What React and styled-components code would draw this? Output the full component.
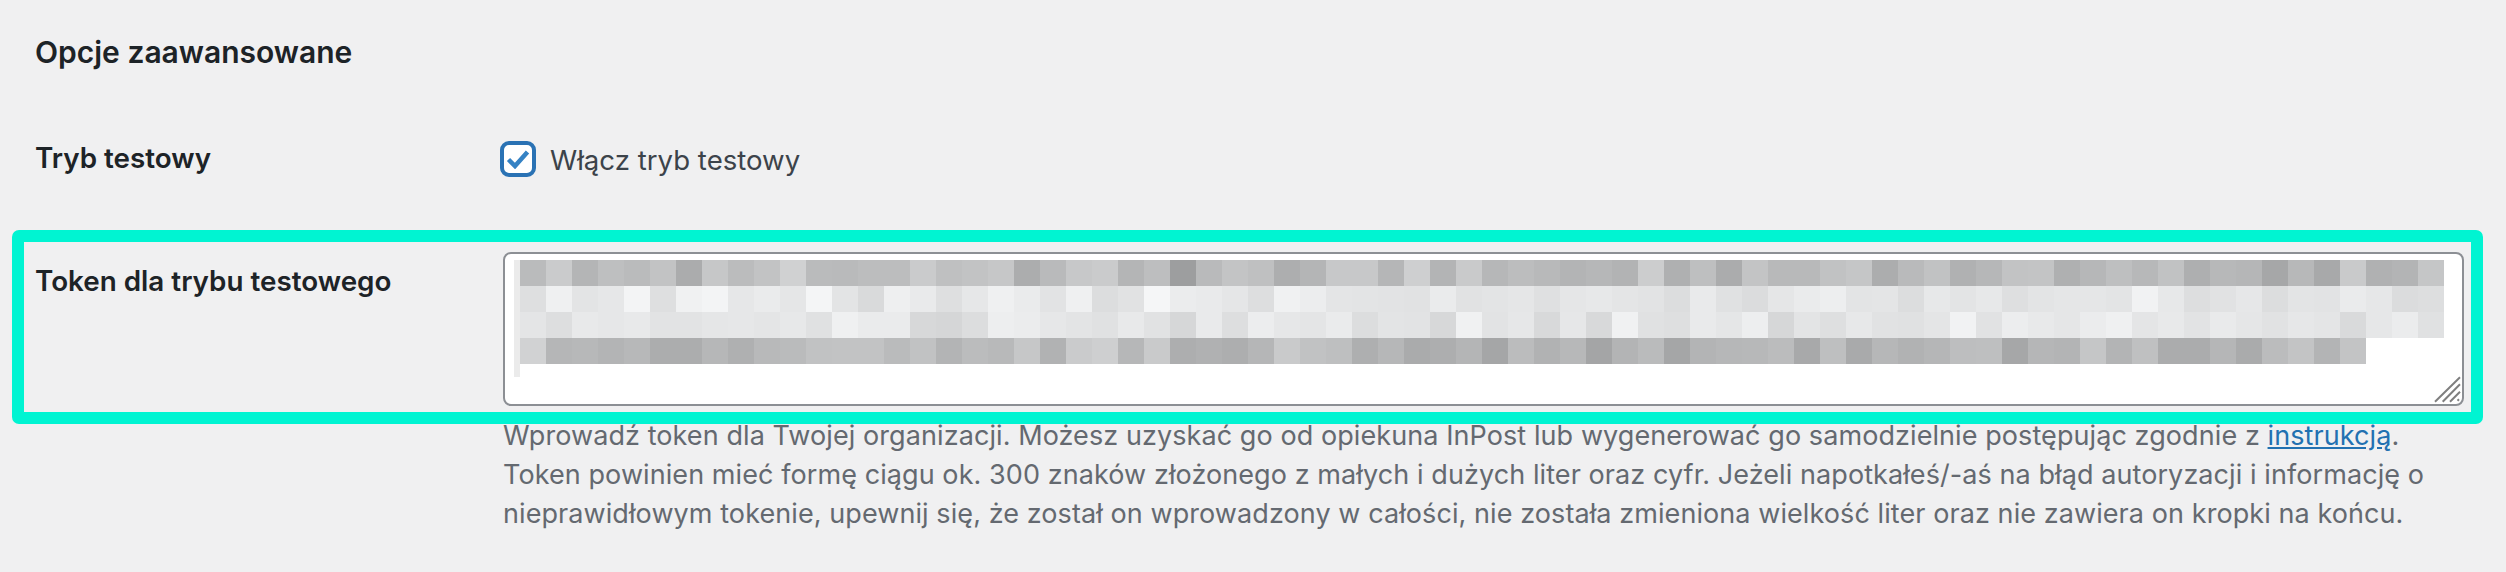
import React from 'react'
import styled, { createGlobalStyle } from 'styled-components'

const GlobalStyle = createGlobalStyle`
    html, body {
        margin: 0;
        background: #f0f0f1;
    }
    body {
        font-family: Inter, "Noto Sans", "Liberation Sans", sans-serif;
        color: #1d2327;
    }
`

// Blurred token, one row of grey levels per line of text
const tokenRows = [
    'ba ca b4 be ba c2 ab c6 bb c2 d0 ba b9 bc bc ca bf c2 c6 ac b9 c7 ca b4 bd 9d b9 c3 bf ad b4 c7 c7 b5 ce b3 c9 b6 bc b8 b3 b6 b2 cc af be ab c3 b8 b8 c1 c5 ac b9 c1 b0 b6 c2 c3 af b6 be b7 c1 ae b7 b5 a6 b7 a8 c9 b0 b3 c5',
    'de ef e3 e6 f3 de f0 f3 e6 ea e5 f4 e3 d9 ee e9 de e6 ef ea e2 ef dc e1 f5 eb e9 e5 dd f0 ec e4 e3 e2 e1 ea e1 e3 e5 df e5 e7 e4 e2 dc e9 e0 db e5 ea ed e3 e4 dc e7 e3 e7 de e3 e5 e5 e3 f1 e7 dd e1 e6 dc e3 e2 ea e6 db dd',
    'e4 dd e8 e6 e8 e2 e2 e5 e6 e4 e7 e0 ef ea ea d7 d5 dc ed eb e6 e3 e0 e8 e1 d6 e9 dd ec e6 e4 ea dc e3 e2 d7 f0 e2 e6 d8 e6 d8 f0 e0 de e9 e5 ed d6 e3 de e7 e1 e0 e4 f1 e1 ec e8 e5 eb ef e4 e8 e2 e9 e5 e1 e6 e4 d9 e6 eb e0',
    'd1 b5 b7 b3 b7 ac ac b6 af b8 ba c1 c2 c2 ba c1 b3 bb b8 c6 b1 ca ce b6 c9 ad b0 ad b5 c9 c1 be ae b6 aa ad b4 a5 bb b1 b7 a4 b3 ba a5 b3 b6 b7 bb a8 be a9 b6 b1 b5 bd be a6 b5 b3 c5 b3 bf ab ab b5 aa bb c3 b3 c3',
].map(row => row.split(' ').map(level => parseInt(level, 16)))

const Page = styled.div`
    position: relative;
    width: 2506px;
    height: 572px;
    box-sizing: border-box;
    padding: 33px 0 0 35px;
    overflow: hidden;
`

const SectionTitle = styled.h2`
    margin: 0;
    font-size: 30px;
    line-height: 38px;
    font-weight: 600;
    color: #1d2327;
`

const FormRow = styled.div`
    display: flex;
    align-items: flex-start;
    margin-top: ${props => props.$gap}px;
`

const RowLabel = styled.div`
    flex: 0 0 468px;
    font-size: 27.8px;
    line-height: 34px;
    font-weight: 600;
    color: #1d2327;
    padding-top: ${props => props.$offset || 0}px;
`

const FieldColumn = styled.div`
    flex: 1;
    min-width: 0;
`

const CheckLabel = styled.label`
    display: flex;
    align-items: center;
    gap: 14px;
    margin-left: -3px;
    font-size: 27.6px;
    line-height: 34px;
    color: #3c434a;
`

const CheckText = styled.span`
    padding-top: 2px;
`

const CheckBox = styled.span`
    display: flex;
    align-items: center;
    justify-content: center;
    width: 36px;
    height: 36px;
    box-sizing: border-box;
    background: #fff;
    border: 4px solid #2a72b4;
    border-radius: 9px;
`

const TokenBox = styled.div`
    position: relative;
    display: flex;
    align-items: flex-start;
    width: 1961px;
    height: 154px;
    box-sizing: border-box;
    padding: 6px 0 0 9px;
    background: #fff;
    border: 2px solid #8c8f94;
    border-radius: 8px;
`

const SelectionEdge = styled.div`
    flex: 0 0 6px;
    height: 117px;
    background: #ebebeb;
`

const TokenLines = styled.div`
    display: flex;
    flex-direction: column;
`

const TokenLine = styled.div`
    display: flex;
`

const TokenCell = styled.span`
    width: 26px;
    height: 26px;
`

const ResizeGrip = styled.svg`
    position: absolute;
    right: 1px;
    bottom: 1px;
    width: 27px;
    height: 27px;
`

const Description = styled.p`
    margin: 10px 0 0;
    font-size: 27px;
    line-height: 39px;
    letter-spacing: 0.08px;
    color: #646970;
    white-space: nowrap;
`

const HelpLink = styled.a`
    color: #2271b1;
    text-decoration: underline;
`

// Highlight drawn over the screenshot, it covers the top of the first help line
const HighlightFrame = styled.div`
    position: absolute;
    left: 12px;
    top: 230px;
    width: 2471px;
    height: 194px;
    box-sizing: border-box;
    border: 12px solid #00f4d2;
    border-radius: 7px;
    pointer-events: none;
`

const App = () => (
    <Page>
        <GlobalStyle />
        <SectionTitle>Opcje zaawansowane</SectionTitle>

        <FormRow $gap={70}>
            <RowLabel>Tryb testowy</RowLabel>
            <FieldColumn>
                <CheckLabel>
                    <CheckBox>
                        <svg width="24" height="20" viewBox="0 0 24 20">
                            <path d="M2.5 10.5 L9 17 L21.5 3" fill="none" stroke="#3582c4" strokeWidth="4.5" />
                        </svg>
                    </CheckBox>
                    <CheckText>Włącz tryb testowy</CheckText>
                </CheckLabel>
            </FieldColumn>
        </FormRow>

        <FormRow $gap={75}>
            <RowLabel $offset={12}>Token dla trybu testowego</RowLabel>
            <FieldColumn>
                <TokenBox>
                    <SelectionEdge />
                    <TokenLines>
                        {tokenRows.map((row, r) => (
                            <TokenLine key={r}>
                                {row.map((level, c) => (
                                    <TokenCell key={c} style={{ background: `rgb(${level}, ${level + 1}, ${level + 2})` }} />
                                ))}
                            </TokenLine>
                        ))}
                    </TokenLines>
                    <ResizeGrip viewBox="0 0 27 27">
                        <path d="M1 25.7 L26 1.3 M8.7 25.7 L26 8.3 M16 25.7 L26 15.7 M23.5 24.8 L25 23.3" fill="none" stroke="#7f7f7f" strokeWidth="2" />
                    </ResizeGrip>
                </TokenBox>
                <Description>
                    Wprowadź token dla Twojej organizacji. Możesz uzyskać go od opiekuna InPost lub wygenerować go samodzielnie postępując zgodnie z <HelpLink href="#">instrukcją</HelpLink>.<br />
                    Token powinien mieć formę ciągu ok. 300 znaków złożonego z małych i dużych liter oraz cyfr. Jeżeli napotkałeś/-aś na błąd autoryzacji i informację o<br />
                    nieprawidłowym tokenie, upewnij się, że został on wprowadzony w całości, nie została zmieniona wielkość liter oraz nie zawiera on kropki na końcu.
                </Description>
            </FieldColumn>
        </FormRow>

        <HighlightFrame />
    </Page>
)

export default App
